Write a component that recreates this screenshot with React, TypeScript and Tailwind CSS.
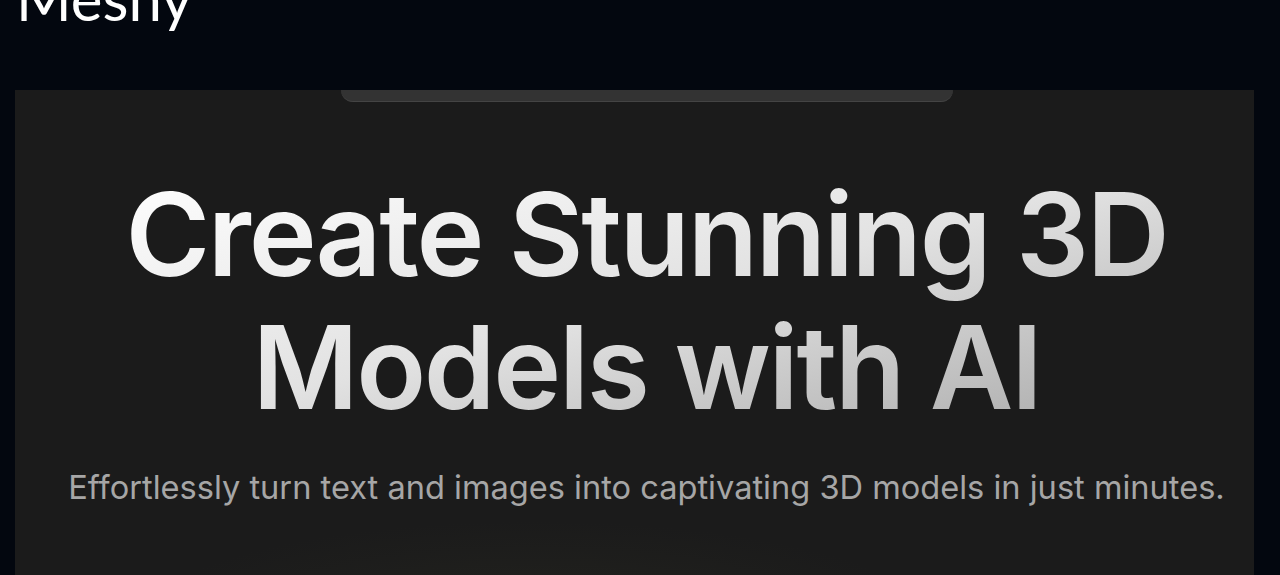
import React from 'react';

export default function App() {
    return (
        <div className="h-[575px] w-[1280px] overflow-hidden bg-[#03070f]" style={{ fontFamily: 'Inter, "Noto Sans", sans-serif' }}>
            <div className="h-[90px] pl-[16px]">
                <div className="-translate-y-[34px] text-[60px] leading-[64px] font-normal text-white" style={{ fontFamily: 'Lato, Inter, sans-serif' }}>
                    Meshy
                </div>
            </div>
            <div className="relative ml-[15px] h-[485px] w-[1239px] overflow-hidden bg-[#1b1b1b] pl-[24px]">
                <div className="pointer-events-none absolute left-[120px] top-[430px] h-[200px] w-[800px] rounded-full bg-[radial-gradient(ellipse_at_center,rgba(60,60,40,0.22),transparent_70%)]" />
                <div className="mx-auto h-[12px] w-[612px] rounded-b-[14px] border-b border-[#444] bg-[#333]" />
                <div className="relative flex flex-col items-center pt-[66px]">
                    <h1 className="bg-gradient-to-br from-white via-[#e2e2e2] to-[#a8a8a8] bg-clip-text text-center text-[115px] font-semibold leading-[133px] tracking-[-0.02em] text-transparent">
                        Create Stunning 3D
                        <br />
                        Models with AI
                    </h1>
                    <p className="mt-[31px] whitespace-nowrap text-center text-[32.6px] leading-[44px] text-[#a6a6a6]">
                        Effortlessly turn text and images into captivating 3D models in just minutes.
                    </p>
                </div>
            </div>
        </div>
    );
}
